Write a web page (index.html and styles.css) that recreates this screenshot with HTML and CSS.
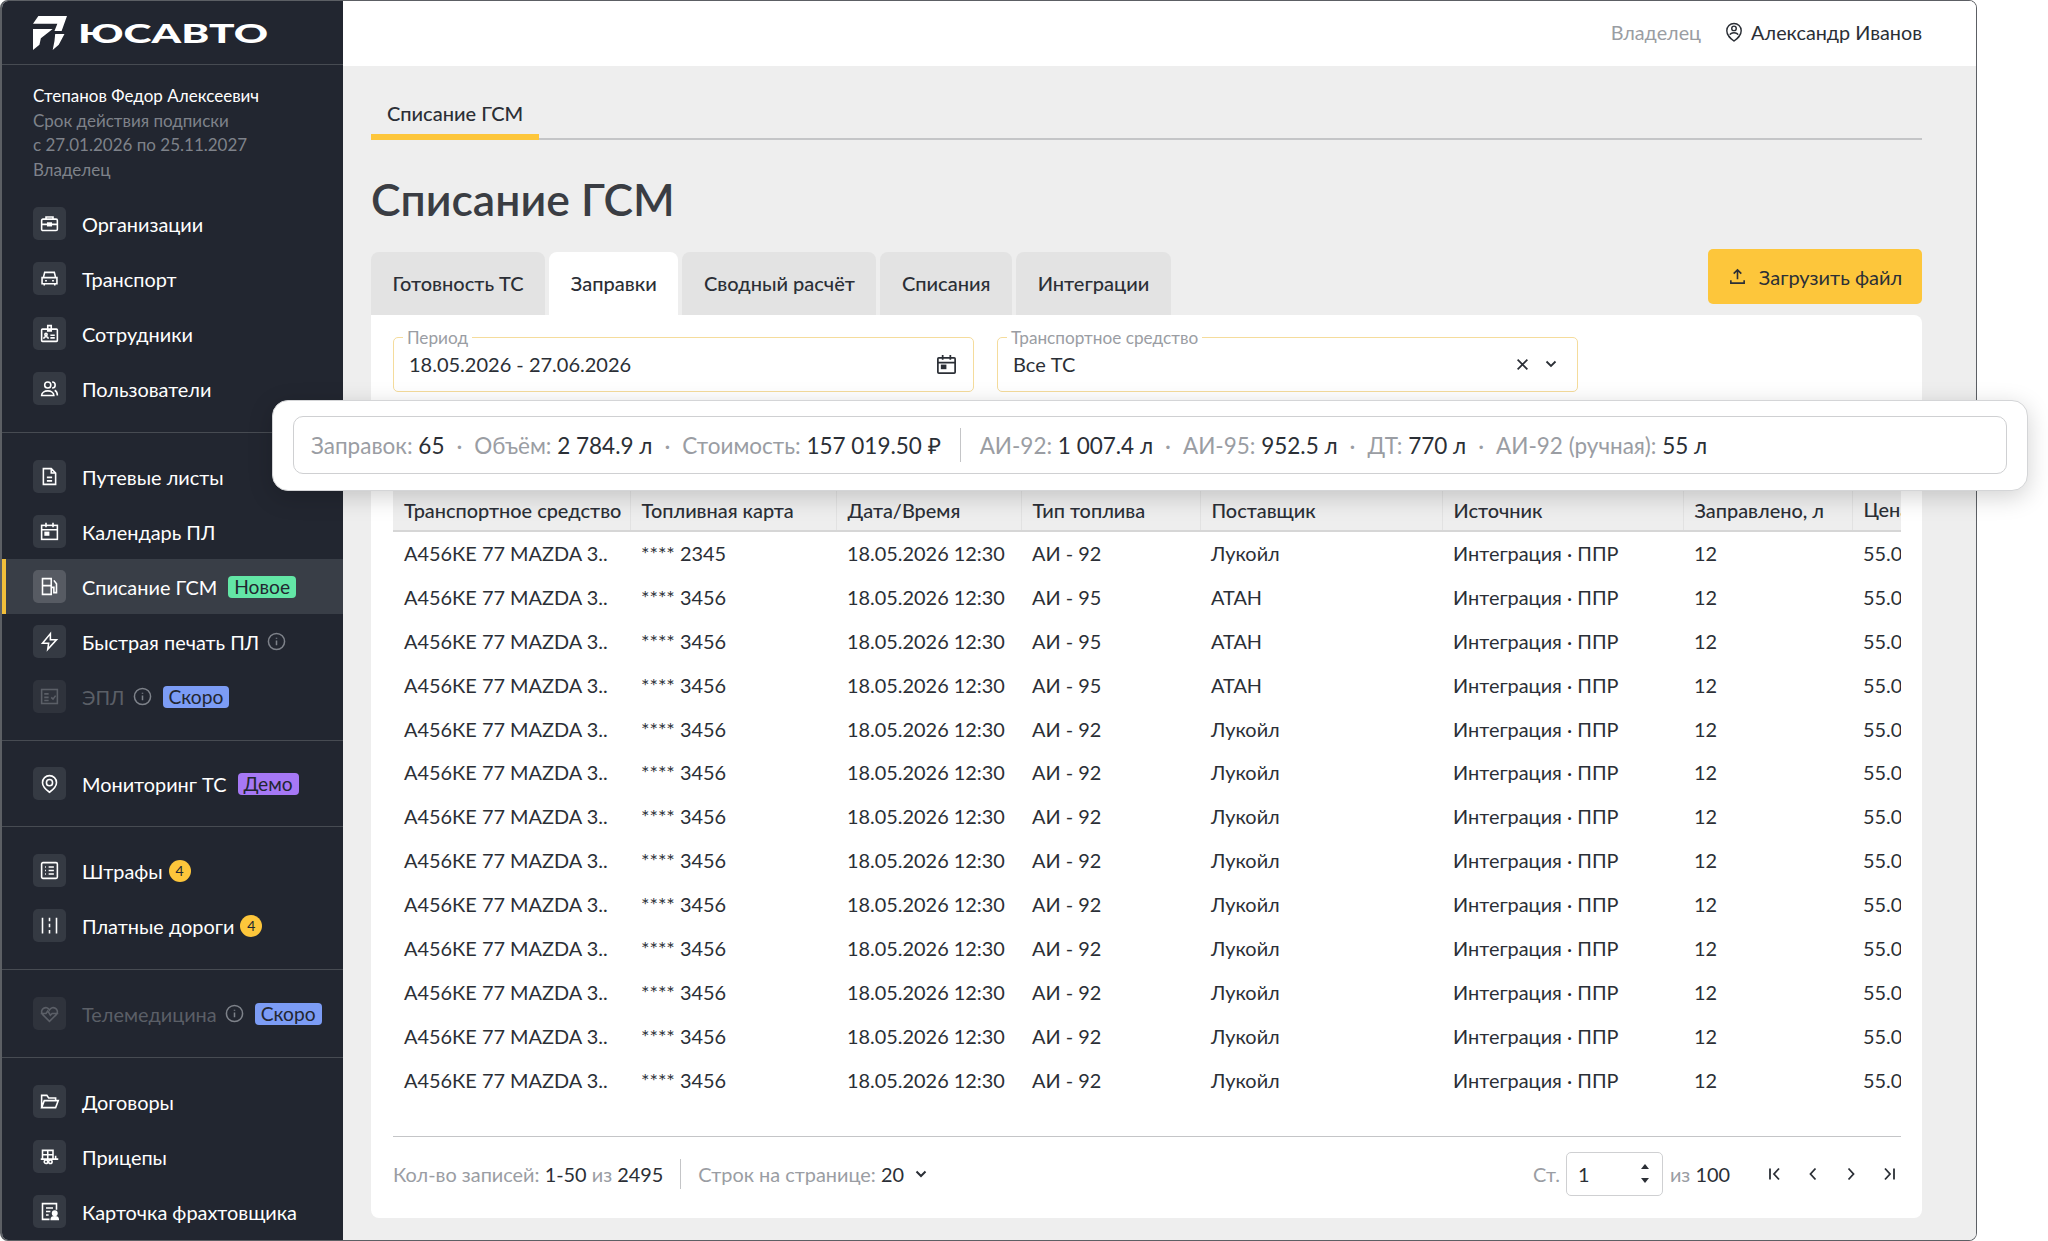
FILE: index.html
```html
<!DOCTYPE html>
<html lang="ru">
<head>
  <meta charset="UTF-8" />
  <title>Списание ГСМ</title>
  <link rel="stylesheet" href="styles.css">
</head>
<body>
  <div class="window">
    <aside class="sidebar">
      <div class="logo">
        <svg class="logo-mark" viewBox="0 0 95 95" width="34" height="34"><path d="M15 0H95L80 42H60L68 22H0Z" fill="#fff"/><path d="M0 36H55L22 62L18 80L0 95Z" fill="#fff"/><path d="M62 50H88L72 80L55 95L60 70Z" fill="#fff"/></svg>
        <span class="logo-text">ЮСАВТО</span>
      </div>

      <div class="user-block">
        <div class="user-name">Степанов Федор Алексеевич</div>
        <div>Срок действия подписки</div>
        <div>с 27.01.2026 по 25.11.2027</div>
        <div>Владелец</div>
      </div>

      <nav class="group first">
        <a class="item"><span class="tile"><svg viewBox="0 0 24 24"><rect x="3" y="7" width="18" height="13" rx="1.5"/><path d="M8 7V4.5h8V7M3 13h18"/><rect x="10" y="11.5" width="4" height="3" fill="#fff"/></svg></span>Организации</a>
        <a class="item"><span class="tile"><svg viewBox="0 0 24 24"><path d="M5 11l1.5-6h11L19 11M3.5 11h17v7h-17zM6 18v2M18 18v2M7 14.5h2M15 14.5h2"/></svg></span>Транспорт</a>
        <a class="item"><span class="tile"><svg viewBox="0 0 24 24"><rect x="3" y="7" width="18" height="14" rx="1"/><path d="M10 9V3h4v6zM13 14h5M13 17h5"/><circle cx="8" cy="13" r="1.3"/><path d="M5.5 18c0-3 5-3 5 0"/></svg></span>Сотрудники</a>
        <a class="item"><span class="tile"><svg viewBox="0 0 24 24"><circle cx="10" cy="8" r="3.5"/><path d="M3 20c0-7 14-7 14 0zM15 4.5a3.5 3.5 0 0 1 0 7M18 14c2 1 3 3 3 6"/></svg></span>Пользователи</a>
      </nav>

      <nav class="group">
        <a class="item"><span class="tile"><svg viewBox="0 0 24 24"><path d="M5 3h9l5 5v13H5zM14 3v5h5M9 13h6M9 17h6"/></svg></span>Путевые листы</a>
        <a class="item"><span class="tile"><svg viewBox="0 0 24 24"><rect x="3" y="5" width="18" height="16"/><path d="M3 10h18M8 2v5M16 2v5"/><rect x="7" y="13" width="4" height="3" fill="#fff"/></svg></span>Календарь ПЛ</a>
        <a class="item active"><span class="tile"><svg viewBox="0 0 24 24"><path d="M4 21V3h10v18zM4 11h10M14 13h3v6h3V9l-3-4"/></svg></span>Списание ГСМ<span class="badge green">Новое</span></a>
        <a class="item"><span class="tile"><svg viewBox="0 0 24 24"><path d="M13 3L4 14h7l-1 7 10-11h-7z"/></svg></span>Быстрая печать ПЛ<svg class="info" viewBox="0 0 20 20"><circle cx="10" cy="10" r="8.5"/><path d="M10 9v5M10 6v1.2"/></svg></a>
        <a class="item off"><span class="tile"><svg viewBox="0 0 24 24"><rect x="3" y="4" width="18" height="16"/><path d="M6 9h5M6 13h5M6 16.5h5M14 13l2 2 3-4"/></svg></span>ЭПЛ<svg class="info" viewBox="0 0 20 20"><circle cx="10" cy="10" r="8.5"/><path d="M10 9v5M10 6v1.2"/></svg><span class="badge blue">Скоро</span></a>
      </nav>

      <nav class="group short">
        <a class="item"><span class="tile"><svg viewBox="0 0 24 24"><path d="M12 22c-4-3-8-6-8-11a8 8 0 0 1 16 0c0 5-4 8-8 11z"/><circle cx="12" cy="11" r="3.5"/></svg></span>Мониторинг ТС<span class="badge purple">Демо</span></a>
      </nav>

      <nav class="group">
        <a class="item"><span class="tile"><svg viewBox="0 0 24 24"><rect x="3" y="3" width="18" height="18" rx="1.5"/><path d="M7 8h1M7 12h1M7 16h1M11 8h6M11 12h6M11 16h6"/></svg></span>Штрафы<span class="count">4</span></a>
        <a class="item"><span class="tile"><svg viewBox="0 0 24 24"><path d="M4 3v18M20 3v18M12 3v4M12 10v4M12 17v4"/></svg></span>Платные дороги<span class="count">4</span></a>
      </nav>

      <nav class="group">
        <a class="item off"><span class="tile"><svg viewBox="0 0 24 24"><path d="M12 21l-8-8c-4-6 5-11 8-5 3-6 12-1 8 5zM2 12h6l2-3 3 5 2-2h7"/></svg></span>Телемедицина<svg class="info" viewBox="0 0 20 20"><circle cx="10" cy="10" r="8.5"/><path d="M10 9v5M10 6v1.2"/></svg><span class="badge blue">Скоро</span></a>
      </nav>

      <nav class="group last">
        <a class="item"><span class="tile"><svg viewBox="0 0 24 24"><path d="M3 19V5h6l2 3h8v3M3 19l3-8h16l-3 8z"/></svg></span>Договоры</a>
        <a class="item"><span class="tile"><svg viewBox="0 0 24 24"><path d="M4 5h12v10H4zM4 10h12M10 5v10M2 15h20M19 11v4"/><circle cx="8" cy="18" r="2"/><circle cx="13" cy="18" r="2"/></svg></span>Прицепы</a>
        <a class="item"><span class="tile"><svg viewBox="0 0 24 24"><path d="M20 10V3H4v18h8M8 8h8M8 12h5M8 16h3"/><circle cx="18" cy="14" r="2.5" fill="#fff"/><path d="M14 21c0-4 8-4 8 0z" fill="#fff"/></svg></span>Карточка фрахтовщика</a>
      </nav>
    </aside>

    <div class="content">
      <header class="topbar">
        <span class="role">Владелец</span>
        <svg class="user-icon" viewBox="0 0 20 24"><path d="M10 22c-4-3-8-6-8-11.500a8 8 0 0 1 16 0c0 5.500-4 8.500-8 11.500z"/><circle cx="10" cy="8" r="2.500"/><path d="M5.500 15c1-3 8-3 9 0"/></svg>
        <span>Александр Иванов</span>
      </header>

      <main class="main">
        <div class="crumbs"><span class="crumb">Списание ГСМ</span></div>
        <h1>Списание ГСМ</h1>

        <div class="tabs-row">
          <div class="tabs">
            <span class="tab">Готовность ТС</span>
            <span class="tab current">Заправки</span>
            <span class="tab">Сводный расчёт</span>
            <span class="tab">Списания</span>
            <span class="tab">Интеграции</span>
          </div>
          <button class="upload">
            <svg viewBox="0 0 20 20"><path d="M10 13V3M6 7l4-4 4 4M3 14v3h14v-3"/></svg>
            Загрузить файл
          </button>
        </div>

        <section class="card">
          <div class="filters">
            <div class="field">
              <span class="legend">Период</span>
              <span>18.05.2026 - 27.06.2026</span>
              <svg class="cal" viewBox="0 0 24 24"><rect x="3" y="5" width="18" height="16" rx="1"/><path d="M3 10h18M8 2v5M16 2v5"/><rect x="7" y="13" width="4" height="3" fill="#2b2f36"/></svg>
            </div>
            <div class="field select">
              <span class="legend">Транспортное средство</span>
              <span>Все ТС</span>
              <svg class="cross" viewBox="0 0 12 12"><path d="M1.500 1.500l9 9M10.500 1.500l-9 9"/></svg>
              <svg class="chev" viewBox="0 0 12 8"><path d="M1.500 1.500L6 6l4.500-4.500"/></svg>
            </div>
          </div>

          <div class="table-wrap">
            <table>
              <colgroup>
                <col class="c-ts"><col class="c-card"><col class="c-date"><col class="c-fuel"><col class="c-sup"><col class="c-src"><col class="c-vol"><col class="c-price">
              </colgroup>
              <thead>
                <tr><th>Транспортное средство</th><th>Топливная карта</th><th>Дата/Время</th><th>Тип топлива</th><th>Поставщик</th><th>Источник</th><th>Заправлено, л</th><th>Цена, ₽</th></tr>
              </thead>
              <tbody>
                <tr><td>А456КЕ 77 MAZDA 3..</td><td>**** 2345</td><td>18.05.2026 12:30</td><td>АИ - 92</td><td>Лукойл</td><td>Интеграция · ППР</td><td>12</td><td>55.00</td></tr>
                <tr><td>А456КЕ 77 MAZDA 3..</td><td>**** 3456</td><td>18.05.2026 12:30</td><td>АИ - 95</td><td>АТАН</td><td>Интеграция · ППР</td><td>12</td><td>55.00</td></tr>
                <tr><td>А456КЕ 77 MAZDA 3..</td><td>**** 3456</td><td>18.05.2026 12:30</td><td>АИ - 95</td><td>АТАН</td><td>Интеграция · ППР</td><td>12</td><td>55.00</td></tr>
                <tr><td>А456КЕ 77 MAZDA 3..</td><td>**** 3456</td><td>18.05.2026 12:30</td><td>АИ - 95</td><td>АТАН</td><td>Интеграция · ППР</td><td>12</td><td>55.00</td></tr>
                <tr><td>А456КЕ 77 MAZDA 3..</td><td>**** 3456</td><td>18.05.2026 12:30</td><td>АИ - 92</td><td>Лукойл</td><td>Интеграция · ППР</td><td>12</td><td>55.00</td></tr>
                <tr><td>А456КЕ 77 MAZDA 3..</td><td>**** 3456</td><td>18.05.2026 12:30</td><td>АИ - 92</td><td>Лукойл</td><td>Интеграция · ППР</td><td>12</td><td>55.00</td></tr>
                <tr><td>А456КЕ 77 MAZDA 3..</td><td>**** 3456</td><td>18.05.2026 12:30</td><td>АИ - 92</td><td>Лукойл</td><td>Интеграция · ППР</td><td>12</td><td>55.00</td></tr>
                <tr><td>А456КЕ 77 MAZDA 3..</td><td>**** 3456</td><td>18.05.2026 12:30</td><td>АИ - 92</td><td>Лукойл</td><td>Интеграция · ППР</td><td>12</td><td>55.00</td></tr>
                <tr><td>А456КЕ 77 MAZDA 3..</td><td>**** 3456</td><td>18.05.2026 12:30</td><td>АИ - 92</td><td>Лукойл</td><td>Интеграция · ППР</td><td>12</td><td>55.00</td></tr>
                <tr><td>А456КЕ 77 MAZDA 3..</td><td>**** 3456</td><td>18.05.2026 12:30</td><td>АИ - 92</td><td>Лукойл</td><td>Интеграция · ППР</td><td>12</td><td>55.00</td></tr>
                <tr><td>А456КЕ 77 MAZDA 3..</td><td>**** 3456</td><td>18.05.2026 12:30</td><td>АИ - 92</td><td>Лукойл</td><td>Интеграция · ППР</td><td>12</td><td>55.00</td></tr>
                <tr><td>А456КЕ 77 MAZDA 3..</td><td>**** 3456</td><td>18.05.2026 12:30</td><td>АИ - 92</td><td>Лукойл</td><td>Интеграция · ППР</td><td>12</td><td>55.00</td></tr>
                <tr><td>А456КЕ 77 MAZDA 3..</td><td>**** 3456</td><td>18.05.2026 12:30</td><td>АИ - 92</td><td>Лукойл</td><td>Интеграция · ППР</td><td>12</td><td>55.00</td></tr>
              </tbody>
            </table>
          </div>

          <footer class="pager">
            <span class="muted">Кол-во записей: <b>1-50</b> из <b>2495</b></span>
            <span class="sep"></span>
            <span class="muted">Строк на странице: <b>20</b></span>
            <svg class="chev small" viewBox="0 0 12 8"><path d="M1.500 1.500L6 6l4.500-4.500"/></svg>
            <span class="muted page-label">Ст.</span>
            <span class="spinner">1<span class="arrows"><i class="up"></i><i class="down"></i></span></span>
            <span class="muted">из <b>100</b></span>
            <span class="nav">
              <svg viewBox="0 0 16 16"><path d="M3 2.500v11M12 2.500L7 8l5 5.500"/></svg>
              <svg viewBox="0 0 16 16"><path d="M10.500 2.500L5.500 8l5 5.500"/></svg>
              <svg viewBox="0 0 16 16"><path d="M5.500 2.500l5 5.500-5 5.500"/></svg>
              <svg viewBox="0 0 16 16"><path d="M13 2.500v11M4 2.500L9 8l-5 5.500"/></svg>
            </span>
          </footer>
        </section>
      </main>
    </div>
  </div>

  <div class="summary">
    <div class="summary-inner">
      <span class="muted">Заправок: <b>65</b></span><span class="dot">·</span>
      <span class="muted">Объём: <b>2 784.9 л</b></span><span class="dot">·</span>
      <span class="muted">Стоимость: <b>157 019.50 ₽</b></span>
      <span class="sep"></span>
      <span class="muted">АИ-92: <b>1 007.4 л</b></span><span class="dot">·</span>
      <span class="muted">АИ-95: <b>952.5 л</b></span><span class="dot">·</span>
      <span class="muted">ДТ: <b>770 л</b></span><span class="dot">·</span>
      <span class="muted">АИ-92 (ручная): <b>55 л</b></span>
    </div>
  </div>
</body>
</html>
```

FILE: styles.css
```css
* {
  box-sizing: border-box;
}

html, body {
  margin: 0;
  height: 100%;
}

body {
  position: relative;
  overflow: hidden;
  background: #fff;
  font-family: "Lato", "Open Sans", "Liberation Sans", sans-serif;
  color: #2b2f36;
}

b {
  font-weight: 400;
  color: #2b2f36;
}

.window {
  display: flex;
  width: 1977px;
  height: 1241px;
  border: 1px solid #5c5f64;
  border-left-width: 2px;
  border-radius: 8px;
  overflow: hidden;
}

/* sidebar */
.sidebar {
  flex: none;
  width: 341px;
  background: #222630;
  color: #fff;
  font-size: 19.9px;
}

.logo {
  display: flex;
  align-items: center;
  gap: 11px;
  height: 64px;
  padding-left: 31px;
  border-bottom: 1px solid #474b52;
}

.logo-text {
  display: inline-block;
  font-size: 26px;
  font-weight: 900;
  line-height: 1;
  transform: scaleX(1.63);
  transform-origin: left center;
}

.user-block {
  height: 131px;
  padding: 19px 0 0 31px;
  font-size: 17px;
  line-height: 24.7px;
  color: #7e828a;
}

.user-name {
  color: #fff;
}

.group {
  padding: 16px 0;
  border-bottom: 1px solid #474b52;
}

.group.first {
  padding-top: 0;
}

.group.short {
  padding: 15px 0;
}

.group.last {
  border-bottom: none;
}

.item {
  display: flex;
  align-items: center;
  height: 55px;
  padding-left: 31px;
  color: #fff;
}

.item.active {
  background: #393e47;
  border-left: 4px solid #f2bf3a;
  padding-left: 27px;
}

.item.off {
  color: #5b5f67;
}

.tile {
  display: flex;
  align-items: center;
  justify-content: center;
  flex: none;
  width: 33px;
  height: 33px;
  margin-right: 16px;
  border-radius: 5px;
  background: #353a43;
}

.active .tile {
  background: #575b63;
}

.tile svg {
  width: 21px;
  height: 21px;
  fill: none;
  stroke: #fff;
  stroke-width: 1.8;
}

.off .tile svg {
  stroke: #5b5f67;
}

.off .tile {
  background: #2f333c;
}

.info {
  flex: none;
  width: 19px;
  height: 19px;
  margin-left: 8px;
  fill: none;
  stroke: #7e828a;
  stroke-width: 1.6;
}

.badge {
  margin-left: 11px;
  padding: 0 6px;
  height: 22px;
  line-height: 22px;
  border-radius: 4px;
  font-size: 19.2px;
  color: #222630;
}

.green { background: #63e6a6; }
.blue { background: #7c9cf5; }
.purple { background: #a678f5; }

.count {
  display: flex;
  align-items: center;
  justify-content: center;
  width: 22px;
  height: 22px;
  margin-left: 6px;
  border-radius: 50%;
  background: #fdc63b;
  color: #222630;
  font-size: 14px;
}

/* content */
.content {
  flex: 1;
  min-width: 0;
  background: #eeeeee;
}

.topbar {
  display: flex;
  align-items: center;
  justify-content: flex-end;
  height: 65px;
  padding: 0 54px 4px 0;
  background: #fff;
  font-size: 19.8px;
}

.role {
  margin-right: 24px;
  color: #9a9da3;
}

.user-icon {
  width: 18px;
  height: 22px;
  margin-right: 8px;
  fill: none;
  stroke: #2b2f36;
  stroke-width: 1.6;
}

.main {
  padding: 0 54px 0 28px;
}

.crumbs {
  display: flex;
  height: 74px;
  align-items: flex-end;
  border-bottom: 2px solid #c4c5c7;
}

.crumb {
  padding: 0 16px 9px;
  margin-bottom: -2px;
  border-bottom: 6px solid #fdc63b;
  font-size: 20px;
  font-weight: 500;
}

h1 {
  margin: 0;
  padding-top: 31px;
  height: 109px;
  font-size: 44.5px;
  line-height: 56px;
  font-weight: 600;
  color: #3a3d43;
}

.tabs-row {
  display: flex;
  justify-content: space-between;
  align-items: flex-start;
  height: 66px;
}

.tabs {
  display: flex;
  gap: 4px;
  margin-top: 3px;
}

.tab {
  height: 63px;
  padding: 0 21.6px;
  line-height: 63px;
  border-radius: 8px 8px 0 0;
  background: #e3e3e3;
  font-size: 20px;
  font-weight: 500;
}

.tab.current {
  background: #fff;
}

.upload {
  display: flex;
  align-items: center;
  justify-content: center;
  gap: 12px;
  width: 214px;
  height: 55px;
  border: none;
  border-radius: 5px;
  background: #fdc63b;
  font: inherit;
  font-size: 20px;
  color: #2b2f36;
}

.upload svg {
  width: 19px;
  height: 19px;
  fill: none;
  stroke: #2b2f36;
  stroke-width: 1.7;
}

.card {
  height: 903px;
  padding: 22px 21px 0 22px;
  background: #fff;
  border-radius: 0 8px 8px 8px;
}

.filters {
  display: flex;
  gap: 23px;
  height: 152px;
}

.field {
  position: relative;
  display: flex;
  align-items: center;
  width: 581px;
  height: 55px;
  padding: 0 15px 1px;
  border: 1.5px solid #f5dc9c;
  border-radius: 5px;
  font-size: 20px;
}

.field.select {
  padding-right: 20px;
}

.legend {
  position: absolute;
  top: -10px;
  left: 9px;
  padding: 0 4px;
  background: #fff;
  font-size: 17.2px;
  line-height: 20px;
  color: #9a9da3;
}

.cal {
  margin-left: auto;
  width: 23px;
  height: 23px;
  fill: none;
  stroke: #2b2f36;
  stroke-width: 1.8;
}

.cross {
  margin-left: auto;
  width: 13px;
  height: 13px;
  fill: none;
  stroke: #2b2f36;
  stroke-width: 1.6;
}

.chev {
  margin-left: 16px;
  width: 12px;
  height: 8px;
  fill: none;
  stroke: #2b2f36;
  stroke-width: 1.8;
}

.table-wrap {
  overflow: hidden;
  height: 648px;
  border-bottom: 1px solid #c4c5c7;
}

table {
  border-collapse: collapse;
  table-layout: fixed;
  width: 1608px;
  font-size: 19.9px;
}

.c-ts { width: 237px; }
.c-card { width: 206px; }
.c-date { width: 185px; }
.c-fuel { width: 179px; }
.c-sup { width: 242px; }
.c-src { width: 241px; }
.c-vol { width: 169px; }
.c-price { width: 149px; }

th {
  height: 42px;
  padding: 0 11px;
  text-align: left;
  font-weight: 500;
  background: #eeeeee;
  border-left: 1px solid #e2e2e2;
  border-bottom: 2px solid #d6d6d6;
  white-space: nowrap;
}

th:first-child {
  border-left: none;
}

td {
  height: 43.92px;
  padding: 0 11px;
  white-space: nowrap;
}

.pager {
  display: flex;
  align-items: center;
  height: 73px;
  font-size: 19.9px;
}

.muted {
  color: #9a9da3;
  white-space: pre;
}

.sep {
  width: 1px;
  height: 30px;
  margin: 0 17px;
  background: #c4c5c7;
}

.chev.small {
  margin-left: 11px;
  stroke-width: 2;
}

.page-label {
  margin-left: auto;
  margin-right: 6px;
}

.spinner {
  display: flex;
  align-items: center;
  justify-content: space-between;
  width: 97px;
  height: 44px;
  padding: 0 13px 0 11px;
  margin-right: 7px;
  border: 1.5px solid #cfd0d2;
  border-radius: 5px;
}

.arrows {
  display: flex;
  flex-direction: column;
  gap: 9px;
}

.arrows i {
  display: block;
  width: 0;
  height: 0;
  border-left: 4.500px solid transparent;
  border-right: 4.500px solid transparent;
}

.arrows .up {
  border-bottom: 5px solid #2b2f36;
}

.arrows .down {
  border-top: 5px solid #2b2f36;
}

.nav {
  display: flex;
  gap: 22px;
  margin-left: 37px;
  margin-right: 4px;
}

.nav svg {
  width: 16px;
  height: 16px;
  fill: none;
  stroke: #2b2f36;
  stroke-width: 1.8;
}

/* highlighted summary laid over the page */
.summary {
  position: absolute;
  top: 400px;
  left: 272px;
  width: 1756px;
  height: 91px;
  padding: 15px 20px 16px;
  background: #fff;
  border: 1px solid #d4d5d7;
  border-radius: 16px;
  box-shadow: 0 6px 24px rgba(0, 0, 0, 0.18);
}

.summary-inner {
  display: flex;
  align-items: center;
  height: 100%;
  padding-left: 17px;
  border: 1.5px solid #cfd0d2;
  border-radius: 10px;
  font-size: 22.5px;
}

.summary .sep {
  height: 34px;
  margin: 0 19px 0 19px;
}

.dot {
  margin: 0 12px;
  color: #9a9da3;
}
```
